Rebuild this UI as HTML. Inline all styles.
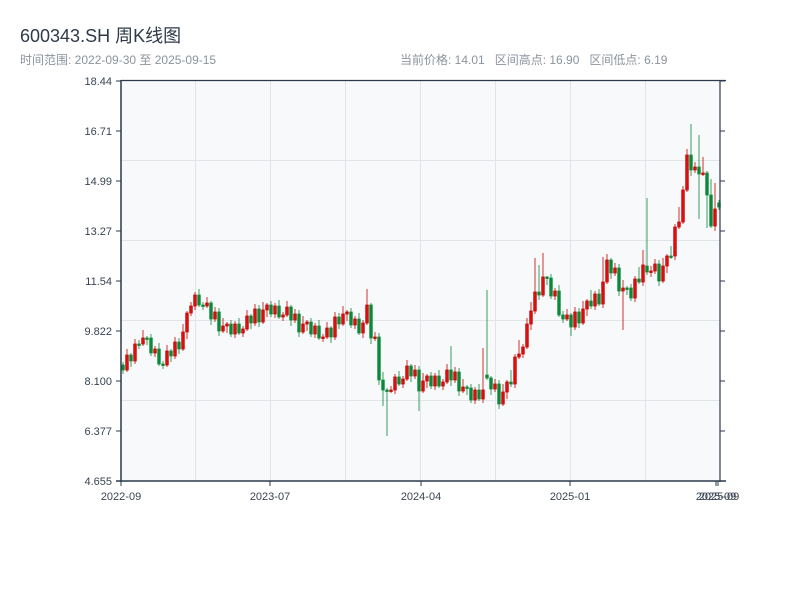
<!DOCTYPE html>
<html><head><meta charset="utf-8"><style>
body{margin:0;width:800px;height:600px;background:#fff;overflow:hidden;font-family:"Liberation Sans","Noto Sans CJK SC",sans-serif;}
#t{position:absolute;left:20px;top:22px;font-size:18px;color:#2f3a48;}
#s{position:absolute;left:20px;top:51px;font-size:12px;color:#8b939c;}
#r{position:absolute;left:400px;top:51px;font-size:12px;color:#8b939c;}
svg{position:absolute;left:0;top:0}
</style></head><body>
<div id="t">600343.SH 周K线图</div>
<div id="s">时间范围: 2022-09-30 至 2025-09-15</div>
<div id="r">当前价格: 14.01&nbsp;&nbsp; 区间高点: 16.90&nbsp;&nbsp; 区间低点: 6.19</div>
<svg width="800" height="600" font-family="Liberation Sans, sans-serif" font-size="11" fill="#3a4452">
<rect x="121" y="81" width="599" height="400" fill="#f7f9fb"/>
<g stroke="#e0e3e8" stroke-width="1">
<path d="M195.5,81V481M270.5,81V481M345.5,81V481M420.5,81V481M495.5,81V481M570.5,81V481M645.5,81V481M121,160.5H720M121,240.5H720M121,320.5H720M121,400.5H720"/>
</g>
<path fill="#0a8a38" stroke="#0a8a38" stroke-width="0.8" d="
M123,362V374M121.7,365h2.6V370h-2.6Z
M131,353V367M129.7,355h2.6V361h-2.6Z
M139,340V349M137.7,344h2.6V345.5h-2.6Z
M147,336V345M145.7,338h2.6V339.5h-2.6Z
M151,334V356M149.7,338h2.6V353h-2.6Z
M159,343V366M157.7,349h2.6V364h-2.6Z
M163,361V369M161.7,364h2.6V365.5h-2.6Z
M171,349V362M169.7,351h2.6V356h-2.6Z
M179,338V354M177.7,342h2.6V349h-2.6Z
M199,289V307M197.7,295h2.6V305h-2.6Z
M203,302V310M201.7,305h2.6V306.5h-2.6Z
M211,301V325M209.7,303h2.6V319h-2.6Z
M219,308V336M217.7,312h2.6V331h-2.6Z
M231,320V337M229.7,324h2.6V334h-2.6Z
M239,318V335M237.7,324h2.6V333h-2.6Z
M251,314V329M249.7,316h2.6V323h-2.6Z
M259,305V327M257.7,309h2.6V322h-2.6Z
M271,301V317M269.7,305h2.6V314h-2.6Z
M279,300V319M277.7,306h2.6V317h-2.6Z
M291,305V326M289.7,307h2.6V320h-2.6Z
M299,310V337M297.7,314h2.6V332h-2.6Z
M311,318V337M309.7,322h2.6V334h-2.6Z
M319,320V340M317.7,326h2.6V338h-2.6Z
M331,326V343M329.7,328h2.6V337h-2.6Z
M339,313V329M337.7,317h2.6V324h-2.6Z
M351,308V328M349.7,312h2.6V325h-2.6Z
M359,313V335M357.7,319h2.6V333h-2.6Z
M371,303V344M369.7,305h2.6V338h-2.6Z
M379,333V385M377.7,337h2.6V380h-2.6Z
M383,372V406M381.7,380h2.6V390h-2.6Z
M387,388V436M385.7,390h2.6V391.5h-2.6Z
M399,371V386M397.7,377h2.6V384h-2.6Z
M411,364V382M409.7,366h2.6V376h-2.6Z
M419,366V411M417.7,370h2.6V391h-2.6Z
M431,372V389M429.7,376h2.6V386h-2.6Z
M439,370V388M437.7,376h2.6V386h-2.6Z
M451,346V386M449.7,370h2.6V380h-2.6Z
M459,368V396M457.7,372h2.6V391h-2.6Z
M467,385V395M465.7,387h2.6V388.5h-2.6Z
M471,384V403M469.7,388h2.6V400h-2.6Z
M479,384V401M477.7,390h2.6V399h-2.6Z
M487,290V380M485.7,375h2.6V378h-2.6Z
M491,376V395M489.7,378h2.6V389h-2.6Z
M499,380V409M497.7,384h2.6V404h-2.6Z
M511,370V387M509.7,382h2.6V384h-2.6Z
M539,265V300M537.7,292h2.6V295h-2.6Z
M547,276V285M545.7,277h2.6V278.5h-2.6Z
M551,274V299M549.7,278h2.6V296h-2.6Z
M559,285V317M557.7,291h2.6V315h-2.6Z
M563,311V323M561.7,315h2.6V319h-2.6Z
M571,313V336M569.7,315h2.6V327h-2.6Z
M579,308V328M577.7,312h2.6V323h-2.6Z
M591,290V309M589.7,301h2.6V306h-2.6Z
M599,289V306M597.7,294h2.6V304h-2.6Z
M611,258V279M609.7,260h2.6V273h-2.6Z
M619,264V296M617.7,268h2.6V291h-2.6Z
M627,286V295M625.7,288h2.6V289.5h-2.6Z
M631,284V301M629.7,288h2.6V298h-2.6Z
M639,267V284M637.7,279h2.6V282h-2.6Z
M647,198V275M645.7,266h2.6V272h-2.6Z
M659,260V286M657.7,264h2.6V281h-2.6Z
M671,246V259M669.7,256h2.6V257.5h-2.6Z
M691,124V176M689.7,155h2.6V170h-2.6Z
M699,135V219M697.7,167h2.6V174h-2.6Z
M707,171V228M705.7,173h2.6V195h-2.6Z
M711,179V228M709.7,195h2.6V226h-2.6Z
M719,200V210M717.7,203h2.6V207h-2.6Z"/>
<path fill="#ee1c1c" stroke="#c80000" stroke-width="0.8" d="
M127,349V372M125.7,355h2.6V370h-2.6Z
M135,339V364M133.7,344h2.6V361h-2.6Z
M143,330V346M141.7,338h2.6V344h-2.6Z
M155,346V357M153.7,349h2.6V353h-2.6Z
M167,345V367M165.7,351h2.6V365h-2.6Z
M175,337V359M173.7,342h2.6V356h-2.6Z
M183,324V351M181.7,332h2.6V349h-2.6Z
M187,311V339M185.7,313h2.6V332h-2.6Z
M191,302V316M189.7,306h2.6V313h-2.6Z
M195,292V310M193.7,295h2.6V306h-2.6Z
M207,297V308M205.7,303h2.6V306h-2.6Z
M215,307V322M213.7,312h2.6V319h-2.6Z
M223,318V333M221.7,326h2.6V331h-2.6Z
M227,322V333M225.7,324h2.6V326h-2.6Z
M235,321V338M233.7,324h2.6V334h-2.6Z
M243,326V337M241.7,329h2.6V333h-2.6Z
M247,310V331M245.7,316h2.6V329h-2.6Z
M255,304V326M253.7,309h2.6V323h-2.6Z
M263,302V324M261.7,310h2.6V322h-2.6Z
M267,303V317M265.7,305h2.6V310h-2.6Z
M275,303V318M273.7,306h2.6V314h-2.6Z
M283,312V321M281.7,315h2.6V317h-2.6Z
M287,301V317M285.7,307h2.6V315h-2.6Z
M295,309V323M293.7,314h2.6V320h-2.6Z
M303,316V334M301.7,324h2.6V332h-2.6Z
M307,320V331M305.7,322h2.6V324h-2.6Z
M315,323V338M313.7,326h2.6V334h-2.6Z
M323,334V342M321.7,337h2.6V338.5h-2.6Z
M327,322V339M325.7,328h2.6V337h-2.6Z
M335,312V340M333.7,317h2.6V337h-2.6Z
M343,306V326M341.7,314h2.6V324h-2.6Z
M347,310V321M345.7,312h2.6V314h-2.6Z
M355,316V329M353.7,319h2.6V325h-2.6Z
M363,320V338M361.7,323h2.6V333h-2.6Z
M367,289V325M365.7,305h2.6V323h-2.6Z
M375,332V341M373.7,337h2.6V338.5h-2.6Z
M391,386V393M389.7,390h2.6V391.5h-2.6Z
M395,374V394M393.7,377h2.6V390h-2.6Z
M403,376V388M401.7,379h2.6V384h-2.6Z
M407,360V381M405.7,366h2.6V379h-2.6Z
M415,365V379M413.7,370h2.6V376h-2.6Z
M423,373V393M421.7,381h2.6V391h-2.6Z
M427,374V388M425.7,376h2.6V381h-2.6Z
M435,373V390M433.7,376h2.6V386h-2.6Z
M443,379V390M441.7,382h2.6V386h-2.6Z
M447,364V384M445.7,370h2.6V382h-2.6Z
M455,367V383M453.7,372h2.6V380h-2.6Z
M463,379V393M461.7,387h2.6V391h-2.6Z
M475,387V404M473.7,390h2.6V400h-2.6Z
M483,348V403M481.7,390h2.6V399h-2.6Z
M495,379V392M493.7,384h2.6V389h-2.6Z
M503,384V406M501.7,392h2.6V404h-2.6Z
M507,380V399M505.7,382h2.6V392h-2.6Z
M515,354V388M513.7,357h2.6V384h-2.6Z
M519,340V359M517.7,354h2.6V357h-2.6Z
M523,344V358M521.7,347h2.6V354h-2.6Z
M527,318V349M525.7,324h2.6V347h-2.6Z
M531,302V330M529.7,311h2.6V324h-2.6Z
M535,258V314M533.7,292h2.6V311h-2.6Z
M543,253V297M541.7,277h2.6V295h-2.6Z
M555,288V300M553.7,291h2.6V296h-2.6Z
M567,309V321M565.7,315h2.6V319h-2.6Z
M575,307V330M573.7,312h2.6V327h-2.6Z
M583,301V325M581.7,309h2.6V323h-2.6Z
M587,299V316M585.7,301h2.6V309h-2.6Z
M595,291V310M593.7,294h2.6V306h-2.6Z
M603,257V308M601.7,282h2.6V304h-2.6Z
M607,254V284M605.7,260h2.6V282h-2.6Z
M615,263V276M613.7,268h2.6V273h-2.6Z
M623,280V330M621.7,288h2.6V291h-2.6Z
M635,276V302M633.7,279h2.6V298h-2.6Z
M643,250V286M641.7,265h2.6V282h-2.6Z
M651,266V277M649.7,271h2.6V272.5h-2.6Z
M655,259V274M653.7,264h2.6V271h-2.6Z
M663,258V283M661.7,266h2.6V281h-2.6Z
M667,254V273M665.7,256h2.6V266h-2.6Z
M675,224V260M673.7,227h2.6V256h-2.6Z
M679,207V229M677.7,222h2.6V227h-2.6Z
M683,186V224M681.7,190h2.6V222h-2.6Z
M687,149V192M685.7,155h2.6V190h-2.6Z
M695,162V173M693.7,167h2.6V170h-2.6Z
M703,157V176M701.7,173h2.6V174.5h-2.6Z
M715,183V231M713.7,209h2.6V226h-2.6Z"/>
<g stroke="#2c3a4c" fill="none">
<path stroke-width="1.2" d="M121,80.5H726M720,80V482"/>
<path stroke-width="1.5" d="M121,80V482M116,481H726"/>
<path stroke-width="1" d="M116,81H121M116,131H121M116,181H121M116,231H121M116,281H121M116,331H121M116,381H121M116,431H121M116,481H121M720,81H725M720,131H725M720,181H725M720,231H725M720,281H725M720,331H725M720,381H725M720,431H725M720,481H725M121,481V486M270,481V486M421,481V486M570,481V486M716,481V486M718,481V486"/>
</g>
<g text-anchor="end">
<text x="112" y="85">18.44</text><text x="112" y="135">16.71</text><text x="112" y="185">14.99</text><text x="112" y="235">13.27</text><text x="112" y="285">11.54</text><text x="112" y="335">9.822</text><text x="112" y="385">8.100</text><text x="112" y="435">6.377</text><text x="112" y="485">4.655</text>
</g>
<g text-anchor="middle">
<text x="121" y="500">2022-09</text><text x="270" y="500">2023-07</text><text x="421" y="500">2024-04</text><text x="570" y="500">2025-01</text><text x="716" y="500">2025-09</text><text x="719" y="500">2025-09</text>
</g>
</svg>
</body></html>
